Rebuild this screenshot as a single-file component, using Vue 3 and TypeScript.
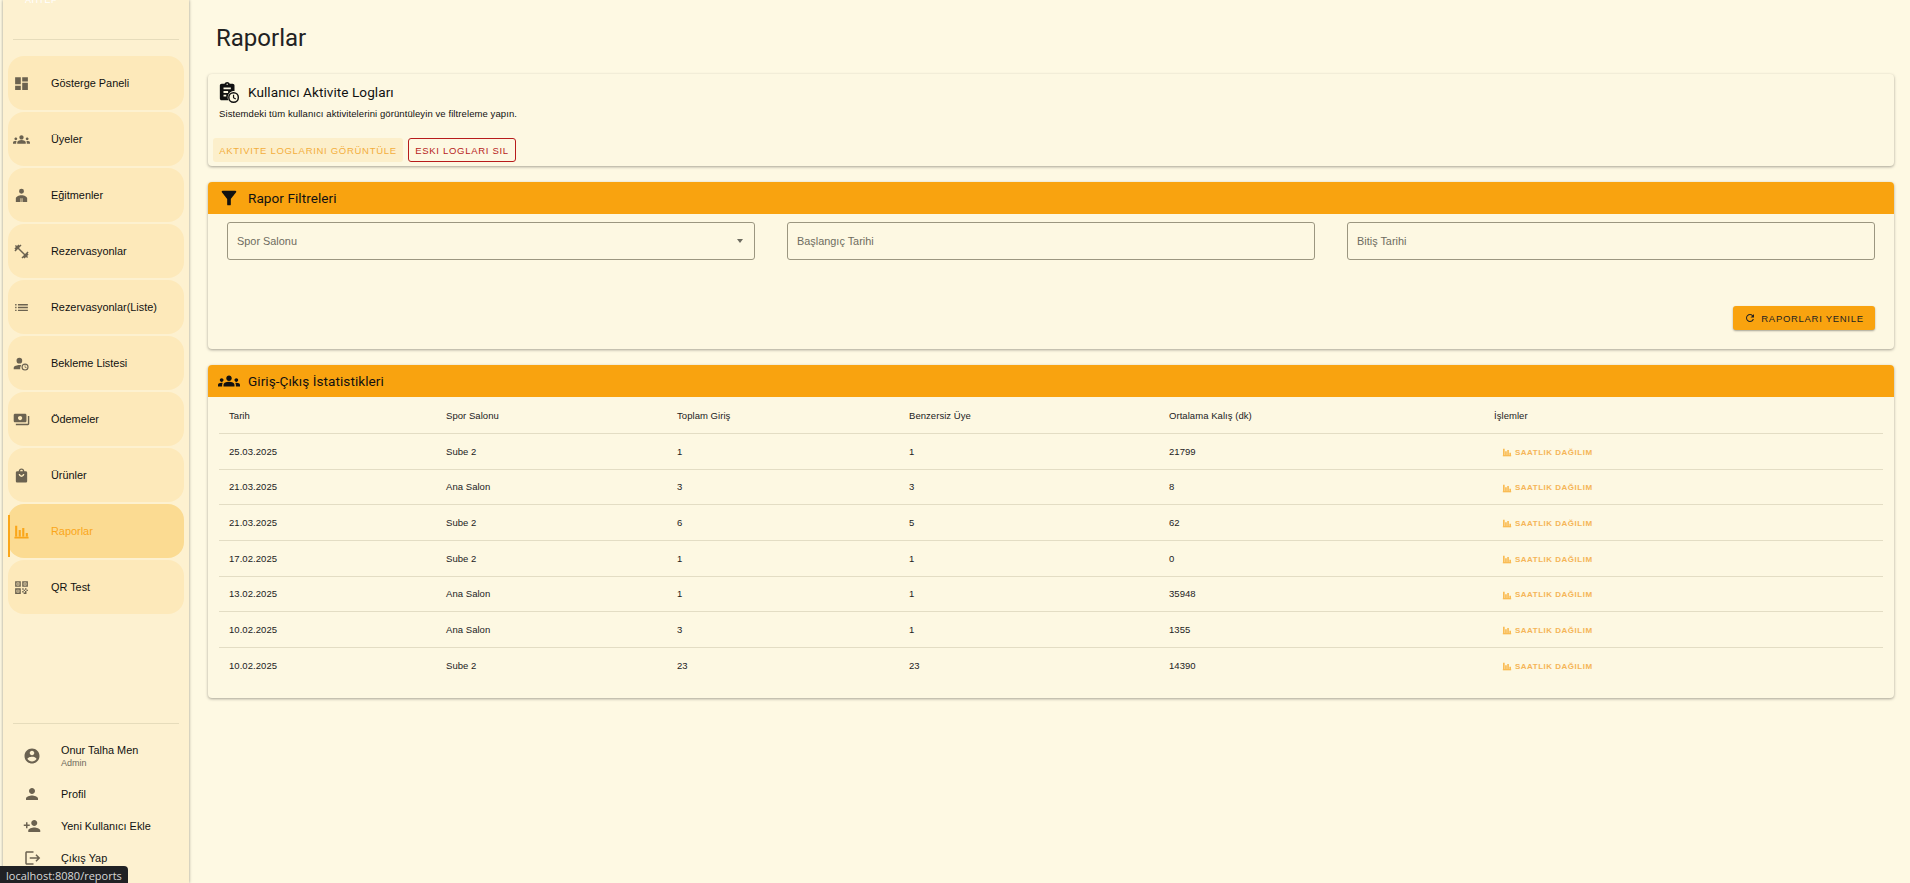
<template>
  <div class="page">
    <aside class="sidebar">
      <div class="logo">AHTEP</div>
      <div class="divider top"></div>

      <nav class="menu">
        <a v-for="item in menu" :key="item.label" class="menu-item" :class="{ active: item.active }">
          <svg class="menu-icon" viewBox="0 0 24 24"><path :d="item.icon" /></svg>
          <span>{{ item.label }}</span>
        </a>
      </nav>

      <div class="bottom">
        <div class="divider"></div>
        <div class="user-list">
          <div class="user-row name-row">
            <svg class="user-icon" viewBox="0 0 24 24"><path :d="icons.account" /></svg>
            <div>
              <div class="user-name">Onur Talha Men</div>
              <div class="user-role">Admin</div>
            </div>
          </div>
          <div v-for="row in userRows" :key="row.label" class="user-row">
            <svg class="user-icon" viewBox="0 0 24 24"><path :d="row.icon" /></svg>
            <div class="user-name">{{ row.label }}</div>
          </div>
        </div>
      </div>
    </aside>

    <main class="main">
      <h1 class="page-title">Raporlar</h1>

      <section class="card log-card">
        <div class="log-title">
          <svg class="title-icon" viewBox="0 0 24 24"><path :d="icons.clipboardClock" /></svg>
          <span>Kullanıcı Aktivite Logları</span>
        </div>
        <p class="log-desc">Sistemdeki tüm kullanıcı aktivitelerini görüntüleyin ve filtreleme yapın.</p>
        <div class="log-actions">
          <button class="btn tonal" type="button">AKTIVITE LOGLARINI GÖRÜNTÜLE</button>
          <button class="btn outlined" type="button">ESKI LOGLARI SIL</button>
        </div>
      </section>

      <section class="card">
        <header class="card-head">
          <svg class="title-icon" viewBox="0 0 24 24"><path :d="icons.filter" /></svg>
          <span>Rapor Filtreleri</span>
        </header>
        <div class="filters">
          <div class="field">
            <span>Spor Salonu</span>
            <i class="caret"></i>
          </div>
          <div class="field"><span>Başlangıç Tarihi</span></div>
          <div class="field"><span>Bitiş Tarihi</span></div>
        </div>
        <div class="filter-actions">
          <button class="btn primary" type="button">
            <svg class="btn-icon" viewBox="0 0 24 24"><path :d="icons.refresh" /></svg>
            RAPORLARI YENILE
          </button>
        </div>
      </section>

      <section class="card">
        <header class="card-head">
          <svg class="title-icon" viewBox="0 0 24 24"><path :d="icons.group" /></svg>
          <span>Giriş-Çıkış İstatistikleri</span>
        </header>
        <div class="table-wrap">
          <table class="stats">
            <colgroup>
              <col v-for="w in colWidths" :key="w" :style="{ width: w + 'px' }" />
            </colgroup>
            <thead>
              <tr>
                <th v-for="h in headers" :key="h">{{ h }}</th>
              </tr>
            </thead>
            <tbody>
              <tr v-for="(r, i) in rows" :key="i">
                <td>{{ r.date }}</td>
                <td>{{ r.gym }}</td>
                <td>{{ r.total }}</td>
                <td>{{ r.unique }}</td>
                <td>{{ r.avg }}</td>
                <td>
                  <a class="link-btn">
                    <svg viewBox="0 0 24 24"><path :d="icons.chart" /></svg>
                    SAATLIK DAĞILIM
                  </a>
                </td>
              </tr>
            </tbody>
          </table>
        </div>
      </section>
    </main>

    <div class="status-url">localhost:8080/reports</div>
  </div>
</template>

<script setup lang="ts">
const icons = {
  dashboard: 'M3 13h8V3H3v10zm0 8h8v-6H3v6zm10 0h8V11h-8v10zm0-18v6h8V3h-8z',
  groups:
    'M12 12.75c1.63 0 3.07.39 4.24.9 1.08.48 1.76 1.56 1.76 2.73V18H6v-1.61c0-1.18.68-2.26 1.76-2.73 1.17-.52 2.61-.91 4.24-.91zM4 13c1.1 0 2-.9 2-2s-.9-2-2-2-2 .9-2 2 .9 2 2 2zm1.13 1.1C4.76 14.04 4.39 14 4 14c-.99 0-1.93.21-2.78.58C.48 14.9 0 15.62 0 16.43V18h4.5v-1.61c0-.83.23-1.61.63-2.29zM20 13c1.1 0 2-.9 2-2s-.9-2-2-2-2 .9-2 2 .9 2 2 2zm4 3.43c0-.81-.48-1.53-1.22-1.85-.85-.37-1.79-.58-2.78-.58-.39 0-.76.04-1.13.1.4.68.63 1.46.63 2.29V18H24v-1.57zM12 6c1.66 0 3 1.34 3 3s-1.34 3-3 3-3-1.34-3-3 1.34-3 3-3z',
  trainer:
    'M12 2.5a3.5 3.5 0 1 1 0 7 3.5 3.5 0 0 1 0-7zM4 21v-5c0-2.2 4-4.5 8-4.5s8 2.3 8 4.5v5h-6.6v-5h-1v5h-.8v-5h-1v5H4z',
  fitness:
    'M20.57 14.86L22 13.43 20.57 12 17 15.57 8.43 7 12 3.43 10.57 2 9.14 3.43 7.71 2 5.57 4.14 4.14 2.71 2.71 4.14l1.43 1.43L2 7.71l1.43 1.43L2 10.57 3.43 12 7 8.43 15.57 17 12 20.57 13.43 22l1.43-1.43L16.29 22l2.14-2.14 1.43 1.43 1.43-1.43-1.43-1.43L22 16.29z',
  list: 'M3 13h2v-2H3v2zm0 4h2v-2H3v2zm0-8h2V7H3v2zm4 4h14v-2H7v2zm0 4h14v-2H7v2zM7 7v2h14V7H7z',
  waiting:
    'M9 4a4 4 0 1 1 0 8 4 4 0 0 1 0-8zm1.2 16H1v-2c0-2.7 5.3-4 8-4 .8 0 1.7.1 2.6.3A7 7 0 0 0 10.2 20zM17 12a5 5 0 1 1 0 10 5 5 0 0 1 0-10zm0 1.6a3.4 3.4 0 1 0 0 6.8 3.4 3.4 0 0 0 0-6.8zm-.5 1h1v2.2l1.8 1-.5.9-2.3-1.3v-2.8z',
  payments:
    'M19 14V6c0-1.1-.9-2-2-2H3c-1.1 0-2 .9-2 2v8c0 1.1.9 2 2 2h14c1.1 0 2-.9 2-2zm-9-1c-1.66 0-3-1.34-3-3s1.34-3 3-3 3 1.34 3 3-1.34 3-3 3zm13-6v11c0 1.1-.9 2-2 2H4v-2h17V7h2z',
  bag: 'M18 6h-2c0-2.21-1.79-4-4-4S8 3.79 8 6H6c-1.1 0-2 .9-2 2v12c0 1.1.9 2 2 2h12c1.1 0 2-.9 2-2V8c0-1.1-.9-2-2-2zm-6-2c1.1 0 2 .9 2 2h-4c0-1.1.9-2 2-2zm0 10c-2.21 0-4-1.79-4-4h2c0 1.1.9 2 2 2s2-.9 2-2h2c0 2.21-1.79 4-4 4z',
  chart: 'M3 4h3v15H3zM8 10h3v9H8zM13 7h3v12h-3zM18 14h3v5h-3zM2 19.5h20V22H2z',
  qr: 'M3 3h8v8H3V3zm2 2v4h4V5H5zm8-2h8v8h-8V3zm2 2v4h4V5h-4zM3 13h8v8H3v-8zm2 2v4h4v-4H5zm1-9h2v2H6V6zm10 0h2v2h-2V6zM6 16h2v2H6v-2zm7-3h2v2h-2v-2zm2 2h2v2h-2v-2zm2-2h2v2h-2v-2zm2 2h2v2h-2v-2zm-6 2h2v2h-2v-2zm4 0h2v2h-2v-2zm-2 2h2v2h-2v-2zm2 0h2v2h-2v-2z',
  account:
    'M12 2C6.48 2 2 6.48 2 12s4.48 10 10 10 10-4.48 10-10S17.52 2 12 2zm0 3c1.66 0 3 1.34 3 3s-1.34 3-3 3-3-1.34-3-3 1.34-3 3-3zm0 14.2c-2.5 0-4.71-1.28-6-3.22.03-1.99 4-3.08 6-3.08 1.99 0 5.97 1.09 6 3.08-1.29 1.94-3.5 3.22-6 3.22z',
  person:
    'M12 12c2.21 0 4-1.79 4-4s-1.79-4-4-4-4 1.79-4 4 1.79 4 4 4zm0 2c-2.67 0-8 1.34-8 4v2h16v-2c0-2.66-5.33-4-8-4z',
  personAdd:
    'M15 12c2.21 0 4-1.79 4-4s-1.79-4-4-4-4 1.79-4 4 1.79 4 4 4zm-9-2V7H4v3H1v2h3v3h2v-3h3v-2H6zm9 4c-2.67 0-8 1.34-8 4v2h16v-2c0-2.66-5.33-4-8-4z',
  logout:
    'M5 3h9v2H5v14h9v2H5c-1.1 0-2-.9-2-2V5c0-1.1.9-2 2-2zm11.6 5.4L18 7l5 5-5 5-1.4-1.4 2.6-2.6H9v-2h10.2l-2.6-2.6z',
  clipboardClock:
    'M17 11c.34 0 .67.03 1 .08V5c0-1.1-.9-2-2-2h-3.18C12.4 1.84 11.3 1 10 1s-2.4.84-2.82 2H4c-1.1 0-2 .9-2 2v14c0 1.1.9 2 2 2h7.26A6.97 6.97 0 0 1 17 11zM10 2.75c.41 0 .75.34.75.75s-.34.75-.75.75-.75-.34-.75-.75.34-.75.75-.75zM6 7h8v2H6V7zm0 4h5v2H6v-2zm0 4h3v2H6v-2zm11-3a6 6 0 1 0 0 12 6 6 0 0 0 0-12zm0 1.6a4.4 4.4 0 1 1 0 8.8 4.4 4.4 0 0 1 0-8.8zM16.3 15v3.6l2.7 1.6.7-1.1-2.1-1.2V15h-1.3z',
  filter:
    'M4.25 5.61C6.27 8.2 10 13 10 13v6c0 .55.45 1 1 1h2c.55 0 1-.45 1-1v-6s3.72-4.8 5.74-7.39A.998.998 0 0 0 18.95 4H5.04c-.83 0-1.3.95-.79 1.61z',
  refresh:
    'M17.65 6.35A7.958 7.958 0 0 0 12 4c-4.42 0-7.99 3.58-7.99 8s3.57 8 7.99 8c3.73 0 6.84-2.55 7.73-6h-2.08A5.99 5.99 0 0 1 12 18c-3.31 0-6-2.69-6-6s2.69-6 6-6c1.66 0 3.14.69 4.22 1.78L13 11h7V4l-2.35 2.35z',
  group:
    'M12 12.75c1.63 0 3.07.39 4.24.9 1.08.48 1.76 1.56 1.76 2.73V18H6v-1.61c0-1.18.68-2.26 1.76-2.73 1.17-.52 2.61-.91 4.24-.91zM4 13c1.1 0 2-.9 2-2s-.9-2-2-2-2 .9-2 2 .9 2 2 2zm1.13 1.1C4.76 14.04 4.39 14 4 14c-.99 0-1.93.21-2.78.58C.48 14.9 0 15.62 0 16.43V18h4.5v-1.61c0-.83.23-1.61.63-2.29zM20 13c1.1 0 2-.9 2-2s-.9-2-2-2-2 .9-2 2 .9 2 2 2zm4 3.43c0-.81-.48-1.53-1.22-1.85-.85-.37-1.79-.58-2.78-.58-.39 0-.76.04-1.13.1.4.68.63 1.46.63 2.29V18H24v-1.57zM12 6c1.66 0 3 1.34 3 3s-1.34 3-3 3-3-1.34-3-3 1.34-3 3-3z',
};

const menu = [
  { label: 'Gösterge Paneli', icon: icons.dashboard },
  { label: 'Üyeler', icon: icons.groups },
  { label: 'Eğitmenler', icon: icons.trainer },
  { label: 'Rezervasyonlar', icon: icons.fitness },
  { label: 'Rezervasyonlar(Liste)', icon: icons.list },
  { label: 'Bekleme Listesi', icon: icons.waiting },
  { label: 'Ödemeler', icon: icons.payments },
  { label: 'Ürünler', icon: icons.bag },
  { label: 'Raporlar', icon: icons.chart, active: true },
  { label: 'QR Test', icon: icons.qr },
];

const userRows = [
  { label: 'Profil', icon: icons.person },
  { label: 'Yeni Kullanıcı Ekle', icon: icons.personAdd },
  { label: 'Çıkış Yap', icon: icons.logout },
];

const headers = ['Tarih', 'Spor Salonu', 'Toplam Giriş', 'Benzersiz Üye', 'Ortalama Kalış (dk)', 'İşlemler'];
const colWidths = [217, 231, 232, 260, 325, 399];

const rows = [
  { date: '25.03.2025', gym: 'Sube 2', total: 1, unique: 1, avg: 21799 },
  { date: '21.03.2025', gym: 'Ana Salon', total: 3, unique: 3, avg: 8 },
  { date: '21.03.2025', gym: 'Sube 2', total: 6, unique: 5, avg: 62 },
  { date: '17.02.2025', gym: 'Sube 2', total: 1, unique: 1, avg: 0 },
  { date: '13.02.2025', gym: 'Ana Salon', total: 1, unique: 1, avg: 35948 },
  { date: '10.02.2025', gym: 'Ana Salon', total: 3, unique: 1, avg: 1355 },
  { date: '10.02.2025', gym: 'Sube 2', total: 23, unique: 23, avg: 14390 },
];
</script>

<style>
html,
body {
  margin: 0;
  height: 100%;
  overflow: hidden;
  background: #fef9e3;
}
</style>

<style scoped>
.page {
  display: flex;
  height: 883px;
  position: relative;
  overflow: hidden;
  background: #fef9e3;
  color: #111;
  font-family: "Liberation Sans", Arial, sans-serif;
}

.sidebar {
  width: 186px;
  margin-left: 3px;
  flex-shrink: 0;
  display: flex;
  flex-direction: column;
  background: #fdf1d0;
  box-shadow: 0 0 3px rgba(0, 0, 0, 0.4);
}

.logo {
  height: 43px;
  margin-top: -4px;
  padding-left: 22px;
  font-size: 9px;
  line-height: 9px;
  letter-spacing: 0.5px;
  color: #fff;
}

.divider {
  height: 1px;
  margin: 0 10px;
  background: #e6dcbb;
}

.menu {
  display: flex;
  flex-direction: column;
  gap: 2px;
  padding: 16px 5px 0;
}

.menu-item {
  height: 54px;
  display: flex;
  align-items: center;
  padding-left: 5px;
  border-radius: 16px;
  background: #fde9ba;
  font-size: 10.9px;
  color: #111;
  position: relative;
}

.menu-icon {
  width: 17px;
  height: 17px;
  margin-right: 21px;
  fill: #6b6250;
  flex-shrink: 0;
}

.menu-item.active {
  background: #fbdb92;
  color: #faa61a;
}

.menu-item.active .menu-icon {
  fill: #faa61a;
}

.menu-item.active::before {
  content: "";
  position: absolute;
  left: 0;
  top: 11px;
  bottom: 1px;
  width: 2px;
  background: #faa61a;
}

.bottom {
  margin-top: auto;
}

.user-list {
  padding: 12px 0 9px 20px;
}

.user-row {
  height: 32px;
  display: flex;
  align-items: center;
}

.user-row.name-row {
  height: 40px;
  margin-bottom: 2px;
}

.user-icon {
  width: 18px;
  height: 18px;
  fill: #6b6250;
  margin-right: 20px;
  flex-shrink: 0;
}

.user-name {
  font-size: 10.9px;
  color: #111;
}

.user-role {
  font-size: 9px;
  margin-top: 2px;
  color: #6f6a5c;
}

.main {
  flex: 1;
  min-width: 0;
  padding: 0 16px 0 19px;
}

.page-title {
  margin: 22px 0 20px 8px;
  font-family: Roboto, sans-serif;
  font-size: 24px;
  line-height: 32px;
  font-weight: 400;
  color: #222;
}

.card {
  background: #fdf8e2;
  border-radius: 4px;
  box-shadow: 0 1px 3px rgba(0, 0, 0, 0.35);
  margin-bottom: 16px;
  overflow: hidden;
}

.log-card {
  padding: 7px 5px 0;
  height: 92px;
  box-sizing: border-box;
}

.log-title {
  display: flex;
  align-items: center;
  padding-left: 5px;
  font-family: Roboto, sans-serif;
  font-size: 13.6px;
  letter-spacing: 0.05px;
}

.title-icon {
  width: 22px;
  height: 22px;
  margin-right: 8px;
  flex-shrink: 0;
  fill: #111;
}

.log-desc {
  margin: 4px 0 0 6px;
  font-size: 9.5px;
  line-height: 14px;
  letter-spacing: 0.09px;
  color: #111;
}

.log-actions {
  display: flex;
  gap: 5px;
  margin-top: 17px;
}

.btn {
  border-radius: 3px;
  font-family: "Liberation Sans", Arial, sans-serif;
  font-size: 9.5px;
  letter-spacing: 0.7px;
  padding: 0;
  border: 0;
  cursor: pointer;
}

.btn.tonal {
  width: 190px;
  height: 24px;
  background: #fcefcb;
  color: #f3ae3d;
}

.btn.outlined {
  width: 108px;
  height: 24px;
  background: transparent;
  border: 1px solid #b71c1c;
  color: #b71c1c;
}

.btn.primary {
  width: 142px;
  height: 24px;
  background: #f9a30f;
  color: #222;
  box-shadow: 0 1px 2px rgba(0, 0, 0, 0.35);
  display: inline-flex;
  align-items: center;
  justify-content: center;
}

.btn-icon {
  width: 12px;
  height: 12px;
  fill: #222;
  margin-right: 5px;
}

.card-head {
  height: 32px;
  padding-left: 10px;
  display: flex;
  align-items: center;
  background: #f9a30f;
  font-family: Roboto, sans-serif;
  font-size: 13.6px;
  letter-spacing: 0.05px;
  color: #111;
}

.filters {
  display: grid;
  grid-template-columns: repeat(3, 1fr);
  gap: 32px;
  padding: 8px 19px 0;
}

.field {
  height: 38px;
  box-sizing: border-box;
  border: 1px solid #9b9680;
  border-radius: 3px;
  padding: 0 9px;
  display: flex;
  align-items: center;
  justify-content: space-between;
  font-size: 10.9px;
  color: #6e6c60;
}

.caret {
  width: 0;
  height: 0;
  border-left: 3.5px solid transparent;
  border-right: 3.5px solid transparent;
  border-top: 4px solid #6e6c60;
  margin-right: 2px;
}

.filter-actions {
  display: flex;
  justify-content: flex-end;
  padding: 46px 19px 19px 0;
}

.table-wrap {
  padding: 0 11px 15px;
}

.stats {
  width: 100%;
  table-layout: fixed;
  border-collapse: collapse;
  font-size: 9.5px;
  letter-spacing: 0.05px;
  color: #222;
}

.stats th,
.stats td {
  text-align: left;
  padding: 0 0 0 10px;
  border-bottom: 1px solid #e3ddc4;
}

.stats th {
  height: 36px;
  font-weight: 400;
}

.stats td {
  height: 34.67px;
}

.stats tbody tr:last-child td {
  border-bottom: 0;
}

.link-btn {
  display: inline-flex;
  align-items: center;
  vertical-align: middle;
  margin-left: 8px;
  font-size: 8px;
  font-weight: 700;
  letter-spacing: 0.5px;
  color: #f5b558;
}

.link-btn svg {
  width: 10px;
  height: 10px;
  margin-right: 3px;
  fill: #f9a825;
}

.status-url {
  position: absolute;
  left: 0;
  bottom: 0;
  height: 17px;
  padding: 0 6px;
  border-radius: 0 4px 0 0;
  background: #202124;
  color: #d8d8d8;
  font-family: "Open Sans", sans-serif;
  font-size: 11px;
  line-height: 19px;
}
</style>
